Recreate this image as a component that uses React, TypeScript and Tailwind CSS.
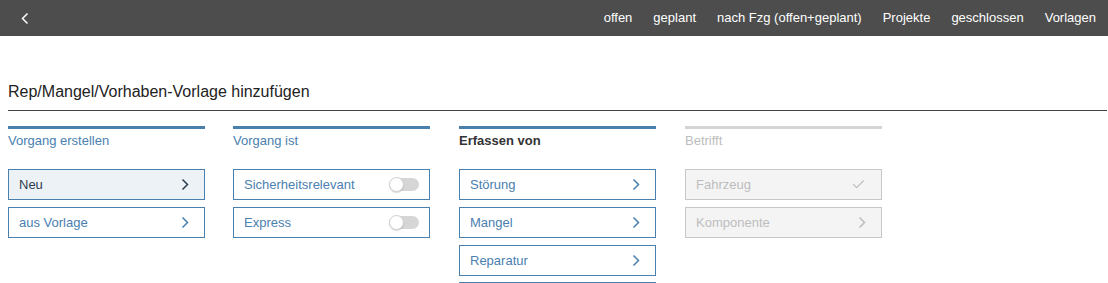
import { Check } from "lucide-react";

const navItems = ["offen", "geplant", "nach Fzg (offen+geplant)", "Projekte", "geschlossen", "Vorlagen"];

function Chevron({ color = "#4a80ae", dir = "right" }: { color?: string; dir?: "right" | "left" }) {
  return (
    <svg width="8" height="13" viewBox="0 0 8 13" fill="none">
      {dir === "right" ? (
        <polyline points="1.5,1.5 6.5,6.5 1.5,11.5" stroke={color} strokeWidth="1.5" />
      ) : (
        <polyline points="6.5,1.5 1.5,6.5 6.5,11.5" stroke={color} strokeWidth="1.5" />
      )}
    </svg>
  );
}

function Toggle() {
  return (
    <div className="relative w-[29px] h-[13px] rounded-full bg-[#d6d6d6]">
      <div className="absolute left-[-1px] top-[-1px] w-[15px] h-[15px] rounded-full bg-white border border-[#cfcfcf] shadow-[0_1px_1px_rgba(0,0,0,0.15)]" />
    </div>
  );
}

type Item = { label: string; kind: "chevron" | "toggle" | "check"; active?: boolean };

function Column({
  title,
  items,
  variant = "normal",
  className = "",
  tail = false,
}: {
  title: string;
  items: Item[];
  variant?: "normal" | "bold" | "disabled";
  className?: string;
  tail?: boolean;
}) {
  const disabled = variant === "disabled";
  return (
    <div className={`w-[197px] flex flex-col ${className}`}>
      <div className={`h-[3px] ${disabled ? "bg-[#d4d4d4]" : "bg-[#4a80ae]"}`} />
      <div
        className={`h-[40px] pt-[4px] text-[13px] leading-[16px] ${
          variant === "bold" ? "font-bold text-[#333]" : disabled ? "text-[#bdbdbd]" : "text-[#4a80b0]"
        }`}
      >
        {title}
      </div>
      <div className="flex flex-col gap-[7px]">
        {items.map((it) => (
          <div
            key={it.label}
            className={`h-[31px] flex items-center justify-between pl-[10px] border text-[13px] ${
              disabled
                ? "bg-[#f4f4f4] border-[#c8c8c8] text-[#bdbdbd] pr-[15px]"
                : it.active
                ? "bg-[#edf2f7] border-[#4a80ae] text-[#2c3e50] pr-[15px]"
                : "bg-white border-[#4a80ae] text-[#4a80b0] pr-[15px]"
            } ${it.kind === "toggle" ? "!pr-[10px]" : ""}`}
          >
            <span>{it.label}</span>
            {it.kind === "chevron" && (
              <Chevron color={disabled ? "#bdbdbd" : it.active ? "#2c3e50" : "#4a80ae"} />
            )}
            {it.kind === "toggle" && <Toggle />}
            {it.kind === "check" && <Check size={15} strokeWidth={1.75} color="#bdbdbd" />}
          </div>
        ))}
        {tail && <div className="h-[2px] -mt-[1px] border-t border-[#4a80ae]" />}
      </div>
    </div>
  );
}

export default function App() {
  return (
    <div className="w-[1108px] h-[283px] overflow-hidden bg-white font-['Liberation_Sans',Arial,sans-serif]">
      <div className="h-[36px] bg-[#4d4d4d] flex items-center justify-between pl-[21px] pr-[12px]">
        <button className="flex items-center">
          <Chevron color="#ffffff" dir="left" />
        </button>
        <nav className="flex items-center gap-[21px] text-[13px] text-white">
          {navItems.map((n) => (
            <span key={n}>{n}</span>
          ))}
        </nav>
      </div>

      <div className="pl-[8px] pr-[1px]">
        <div className="pt-[46px] pb-[8px] border-b border-[#444] text-[16px] leading-[20px] text-[#222]">
          Rep/Mangel/Vorhaben-Vorlage hinzufügen
        </div>

        <div className="flex mt-[15px]">
          <Column
            title="Vorgang erstellen"
            items={[
              { label: "Neu", kind: "chevron", active: true },
              { label: "aus Vorlage", kind: "chevron" },
            ]}
          />
          <Column
            className="ml-[28px]"
            title="Vorgang ist"
            items={[
              { label: "Sicherheitsrelevant", kind: "toggle" },
              { label: "Express", kind: "toggle" },
            ]}
          />
          <Column
            className="ml-[29px]"
            title="Erfassen von"
            variant="bold"
            tail
            items={[
              { label: "Störung", kind: "chevron" },
              { label: "Mangel", kind: "chevron" },
              { label: "Reparatur", kind: "chevron" },
            ]}
          />
          <Column
            className="ml-[29px]"
            title="Betrifft"
            variant="disabled"
            items={[
              { label: "Fahrzeug", kind: "check" },
              { label: "Komponente", kind: "chevron" },
            ]}
          />
        </div>
      </div>
    </div>
  );
}
